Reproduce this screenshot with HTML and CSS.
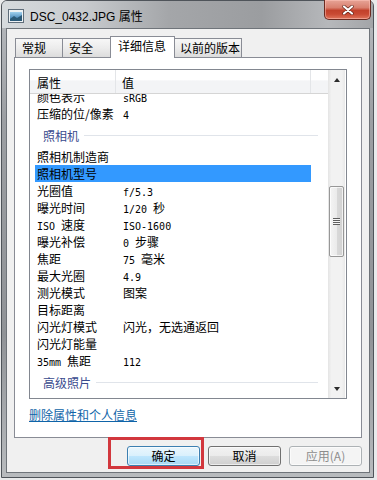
FILE: index.html
```html
<!DOCTYPE html>
<html lang="zh-CN">
<head>
    <meta charset="UTF-8">
    <meta name="viewport" content="width=device-width, initial-scale=1.0">
    <title>DSC_0432.JPG 属性</title>
    <link rel="stylesheet" href="styles.css">
</head>
<body>
    <div class="window">
        <div class="titlebar">
            <svg class="title-icon" width="16" height="14" viewBox="0 0 16 14">
                <defs>
                    <linearGradient id="sky" x1="0" y1="0" x2="0" y2="1">
                        <stop offset="0" stop-color="#9fd0ee"/>
                        <stop offset="1" stop-color="#2b6ea6"/>
                    </linearGradient>
                </defs>
                <rect x="0.5" y="0.5" width="15" height="13" fill="#eef2f5" stroke="#5f6d7a"/>
                <rect x="2" y="3" width="12" height="9" fill="url(#sky)"/>
                <path d="M2 10 L6 7 L9 9 L14 6 V12 H2 Z" fill="#2c5a78"/>
            </svg>
            <span class="title">DSC_0432.JPG 属性</span>
            <div class="close-btn">
                <svg width="12" height="10" viewBox="0 0 12 10">
                    <path d="M2 1.5 L10 8.5 M10 1.5 L2 8.5" stroke="#5a1e14" stroke-width="3.4" stroke-linecap="round"/>
                    <path d="M2 1.5 L10 8.5 M10 1.5 L2 8.5" stroke="#ffffff" stroke-width="2.2" stroke-linecap="round"/>
                </svg>
            </div>
        </div>

        <div class="client">
            <div class="tabs">
                <div class="tab tab-general">常规</div>
                <div class="tab tab-security">安全</div>
                <div class="tab tab-details active">详细信息</div>
                <div class="tab tab-versions">以前的版本</div>
            </div>

            <div class="tab-panel">
                <div class="listview">
                    <div class="list-main">
                        <div class="list-header">
                            <div class="col col-name">属性</div>
                            <div class="col col-value">值</div>
                            <div class="col col-fill"></div>
                        </div>
                        <div class="list-body">
                            <div class="list-rows">
                                <div class="row"><span class="name">颜色表示</span><span class="value"><span class="m">sRGB</span></span></div>
                                <div class="row"><span class="name">压缩的位/像素</span><span class="value"><span class="m">4</span></span></div>
                                <div class="group">照相机</div>
                                <div class="row"><span class="name">照相机制造商</span><span class="value"></span></div>
                                <div class="row selected"><span class="name">照相机型号</span><span class="value"></span></div>
                                <div class="row"><span class="name">光圈值</span><span class="value"><span class="m">f/5.3</span></span></div>
                                <div class="row"><span class="name">曝光时间</span><span class="value"><span class="m">1/20 </span>秒</span></div>
                                <div class="row"><span class="name"><span class="m">ISO </span>速度</span><span class="value"><span class="m">ISO-1600</span></span></div>
                                <div class="row"><span class="name">曝光补偿</span><span class="value"><span class="m">0 </span>步骤</span></div>
                                <div class="row"><span class="name">焦距</span><span class="value"><span class="m">75 </span>毫米</span></div>
                                <div class="row"><span class="name">最大光圈</span><span class="value"><span class="m">4.9</span></span></div>
                                <div class="row"><span class="name">测光模式</span><span class="value">图案</span></div>
                                <div class="row"><span class="name">目标距离</span><span class="value"></span></div>
                                <div class="row"><span class="name">闪光灯模式</span><span class="value">闪光，无选通返回</span></div>
                                <div class="row"><span class="name">闪光灯能量</span><span class="value"></span></div>
                                <div class="row"><span class="name"><span class="m">35mm </span>焦距</span><span class="value"><span class="m">112</span></span></div>
                                <div class="group">高级照片</div>
                            </div>
                        </div>
                    </div>
                    <div class="vscroll">
                        <div class="sb-btn"><span class="arrow-up"></span></div>
                        <div class="sb-track">
                            <div class="sb-thumb"><span class="grip"></span></div>
                        </div>
                        <div class="sb-btn"><span class="arrow-down"></span></div>
                    </div>
                </div>
                <a class="remove-link" href="#">删除属性和个人信息</a>
            </div>

            <div class="buttons">
                <button class="btn btn-default">确定</button>
                <button class="btn">取消</button>
                <button class="btn" disabled>应用(A)</button>
            </div>
        </div>
    </div>

    <!-- red annotation around the OK button -->
    <div class="mark-box"></div>
</body>
</html>
```

FILE: styles.css
```css
* {
    margin: 0;
    padding: 0;
    box-sizing: border-box;
}

body {
    width: 377px;
    height: 480px;
    background: #e9eaeb;
    font-family: "Noto Sans CJK SC", sans-serif;
    font-size: 12px;
    color: #000;
    position: relative;
    overflow: hidden;
}

/* window frame */
.window {
    margin-left: 1px;
    width: 373px;
    height: 478px;
    border: 1px solid #4f545a;
    border-radius: 6px 6px 0 0;
    background: linear-gradient(180deg, #b9bcc0 0%, #9c9fa3 25%, #909397 70%, #b8bbbe 100%);
    display: flex;
    flex-direction: column;
}

.titlebar {
    height: 27px;
    display: flex;
    align-items: center;
    padding-left: 6px;
    border-radius: 5px 5px 0 0;
    background: linear-gradient(90deg, #d6dadd 0%, #c8cbce 22%, #a4a6a9 45%, #9b9da0 70%, #b6b8bb 88%, #a3a5a8 100%);
}

.title-icon {
    margin-right: 6px;
    margin-top: 2px;
    flex-shrink: 0;
}

.title {
    font-family: "Liberation Sans", "Noto Sans CJK SC", sans-serif;
    font-size: 12px;
    color: #000;
    margin-top: 2px;
}

.close-btn {
    margin-left: auto;
    margin-right: 2px;
    align-self: flex-start;
    margin-top: -1px;
    width: 47px;
    height: 20px;
    border: 1px solid #6b2a20;
    border-top: none;
    border-radius: 0 0 5px 5px;
    background: linear-gradient(180deg, #e7a497 0%, #d9806f 40%, #c2412b 55%, #c94a33 75%, #e0755c 100%);
    display: flex;
    align-items: center;
    justify-content: center;
    box-shadow: inset 0 0 0 1px rgba(255, 200, 190, 0.5);
}

.client {
    margin-left: 4px;
    width: 364px;
    height: 445px;
    border: 1px solid #6f747a;
    background: #f0f0f0;
}

/* tabs */
.tabs {
    height: 28px;
    display: flex;
    align-items: flex-end;
    padding-left: 8px;
}

.tab {
    height: 19px;
    line-height: 18px;
    padding-left: 6px;
    border: 1px solid #898c95;
    border-bottom: none;
    background: linear-gradient(180deg, #f7f7f7 0%, #ececec 50%, #dcdcdc 100%);
    margin-left: -1px;
}

.tab-general {
    width: 48px;
    margin-left: 0;
}

.tab-security {
    width: 49px;
}

.tab-details {
    width: 65px;
}

.tab-versions {
    width: 68px;
    padding-left: 5px;
}

.tab.active {
    height: 22px;
    line-height: 18px;
    margin-bottom: -1px;
    background: #fff;
    padding-left: 7px;
    position: relative;
    z-index: 1;
}

.tab-panel {
    margin-left: 7px;
    width: 348px;
    height: 381px;
    border: 1px solid #898c95;
    background: #fff;
    padding: 11px 0 0 14px;
}

/* details list */
.listview {
    width: 318px;
    height: 330px;
    border: 1px solid #828790;
    display: flex;
}

.list-main {
    width: 298px;
}

.list-header {
    height: 24px;
    display: flex;
    border-bottom: 1px solid #d5d5d5;
    background: linear-gradient(180deg, #ffffff 0%, #ffffff 45%, #f3f4f6 46%, #f3f4f6 100%);
}

.col {
    padding-top: 4px;
    line-height: 17px;
}

.col-name {
    width: 86px;
    padding-left: 7px;
    border-right: 1px solid #e3e5e8;
}

.col-value {
    width: 195px;
    padding-left: 6px;
    border-right: 1px solid #e3e5e8;
}

.col-fill {
    flex: 1;
}

.list-body {
    height: 304px;
    overflow: hidden;
    padding-left: 5px;
}

.list-rows {
    margin-top: -6px;
}

.row {
    width: 276px;
    height: 17px;
    line-height: 17px;
    padding-left: 2px;
    display: flex;
    white-space: nowrap;
}

.row.selected {
    background: #3399ff;
}

.name {
    width: 86px;
    flex-shrink: 0;
}

.m {
    font-family: "DejaVu Sans Mono", monospace;
    font-size: 10px;
}

.group {
    width: 283px;
    height: 26px;
    line-height: 17px;
    padding: 5px 0 4px 8px;
    display: flex;
    align-items: center;
    color: #3a4b8e;
}

.group::after {
    content: "";
    flex: 1;
    height: 1px;
    margin-left: 5px;
    background: #e0e4ea;
}

/* scrollbar */
.vscroll {
    width: 17px;
    display: flex;
    flex-direction: column;
    background: linear-gradient(90deg, #e4e4e4 0%, #f2f2f2 20%, #f2f2f2 80%, #e9e9e9 100%);
}

.sb-btn {
    height: 17px;
    display: flex;
    align-items: center;
    justify-content: center;
}

.arrow-up {
    width: 0;
    height: 0;
    border-left: 3.5px solid transparent;
    border-right: 3.5px solid transparent;
    border-bottom: 4px solid #2c2c2c;
    margin-top: 3px;
}

.arrow-down {
    width: 0;
    height: 0;
    border-left: 3.5px solid transparent;
    border-right: 3.5px solid transparent;
    border-top: 4px solid #2c2c2c;
    margin-bottom: 2px;
}

.sb-track {
    flex: 1;
}

.sb-thumb {
    margin: 99px 1px 0 1px;
    height: 71px;
    border: 1px solid #979797;
    border-radius: 2px;
    background: linear-gradient(90deg, #f4f4f4 0%, #ebebeb 50%, #d9d9d9 51%, #d2d2d2 100%);
    box-shadow: inset 0 0 0 1px rgba(255, 255, 255, 0.7);
    display: flex;
    align-items: center;
    justify-content: center;
}

.grip {
    width: 7px;
    height: 7px;
    background: repeating-linear-gradient(180deg, #5f5f5f 0, #5f5f5f 1px, #f6f6f6 1px, #f6f6f6 2px);
}

.remove-link {
    display: inline-block;
    margin-top: 9px;
    line-height: 14px;
    color: #0f64a8;
    text-decoration: underline;
}

/* dialog buttons */
.buttons {
    display: flex;
    justify-content: flex-end;
    gap: 8px;
    margin-top: 8px;
    padding-right: 7px;
}

.btn {
    width: 73px;
    height: 20px;
    font-family: "Noto Sans CJK SC", sans-serif;
    font-size: 12px;
    line-height: 16px;
    color: #000;
    border: 1px solid #707070;
    border-radius: 3px;
    background: linear-gradient(180deg, #f2f2f2 0%, #ebebeb 50%, #dddddd 51%, #cfcfcf 100%);
    box-shadow: inset 0 0 0 1px rgba(255, 255, 255, 0.6);
}

.btn-default {
    border-color: #3c7fb1;
    background: linear-gradient(180deg, #eaf6fd 0%, #d9f0fc 50%, #bee6fd 51%, #a7d9f5 100%);
}

.btn:disabled {
    color: #8d8d8d;
    border-color: #adb2b5;
    background: #f4f4f4;
}

.mark-box {
    position: absolute;
    left: 108px;
    top: 437px;
    width: 96px;
    height: 32px;
    border: 3px solid #d2373d;
}
```
